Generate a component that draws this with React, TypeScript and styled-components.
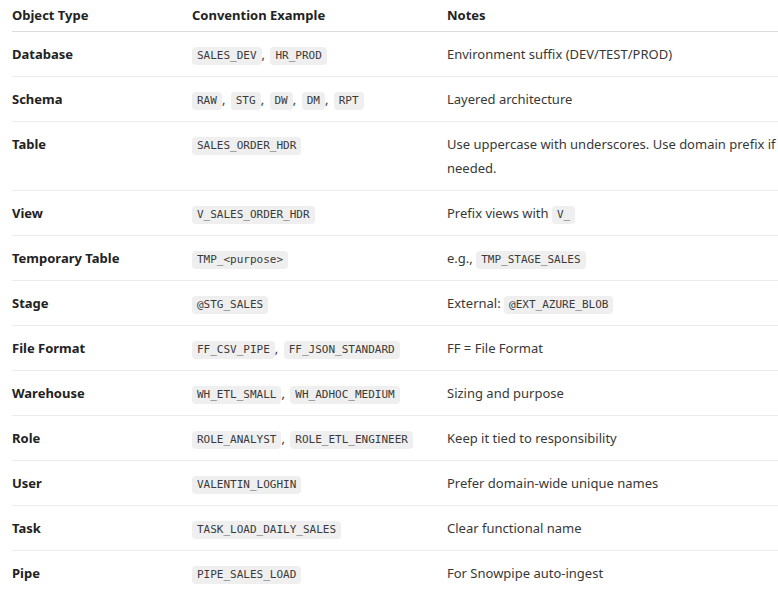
import React from "react";
import styled, { createGlobalStyle } from "styled-components";

const GlobalStyle = createGlobalStyle`
  html, body {
    margin: 0;
    padding: 0;
    background: #ffffff;
    overflow: hidden;
  }
  body {
    font-family: "Noto Sans", "Open Sans", sans-serif;
    color: #333333;
  }
`;

const Page = styled.div`
  padding: 0 0 0 12px;
  width: 790px;
`;

const Table = styled.table`
  width: 780px;
  border-collapse: collapse;
  table-layout: fixed;
  font-size: 13px;
  line-height: 24px;
`;

const HeadCell = styled.th<{ $width?: string }>`
  width: ${(p) => p.$width || "auto"};
  text-align: left;
  font-weight: 700;
  color: #222222;
  padding: 3px 0 4px;
  border-bottom: 1px solid #dcdcdc;
`;

const Row = styled.tr`
  border-bottom: 1px solid #ececec;
`;

const Cell = styled.td<{ $bold?: boolean }>`
  padding: 10px 0;
  vertical-align: top;
  font-weight: ${(p) => (p.$bold ? 700 : 400)};
  color: ${(p) => (p.$bold ? "#222222" : "#383838")};
`;

const Code = styled.code`
  font-family: "DejaVu Sans Mono", "Liberation Mono", monospace;
  font-size: 11px;
  line-height: 15px;
  color: #3a3a3a;
  background: #efefef;
  border-radius: 4px;
  padding: 2px 5px 3px;
`;

const Sep = styled.span`
  margin-right: 2px;
`;

type Part = string | { code: string };

const c = (code: string): Part => ({ code });

const rows: { type: string; example: string[]; notes: Part[] }[] = [
  { type: "Database", example: ["SALES_DEV", "HR_PROD"], notes: ["Environment suffix (DEV/TEST/PROD)"] },
  { type: "Schema", example: ["RAW", "STG", "DW", "DM", "RPT"], notes: ["Layered architecture"] },
  {
    type: "Table",
    example: ["SALES_ORDER_HDR"],
    notes: ["Use uppercase with underscores. Use domain prefix if needed."],
  },
  { type: "View", example: ["V_SALES_ORDER_HDR"], notes: ["Prefix views with ", c("V_")] },
  { type: "Temporary Table", example: ["TMP_<purpose>"], notes: ["e.g., ", c("TMP_STAGE_SALES")] },
  { type: "Stage", example: ["@STG_SALES"], notes: ["External: ", c("@EXT_AZURE_BLOB")] },
  { type: "File Format", example: ["FF_CSV_PIPE", "FF_JSON_STANDARD"], notes: ["FF = File Format"] },
  { type: "Warehouse", example: ["WH_ETL_SMALL", "WH_ADHOC_MEDIUM"], notes: ["Sizing and purpose"] },
  { type: "Role", example: ["ROLE_ANALYST", "ROLE_ETL_ENGINEER"], notes: ["Keep it tied to responsibility"] },
  { type: "User", example: ["VALENTIN_LOGHIN"], notes: ["Prefer domain-wide unique names"] },
  { type: "Task", example: ["TASK_LOAD_DAILY_SALES"], notes: ["Clear functional name"] },
  { type: "Pipe", example: ["PIPE_SALES_LOAD"], notes: ["For Snowpipe auto-ingest"] },
];

export default function App() {
  return (
    <>
      <GlobalStyle />
      <Page>
        <Table>
          <thead>
            <tr>
              <HeadCell $width="180px">Object Type</HeadCell>
              <HeadCell $width="255px">Convention Example</HeadCell>
              <HeadCell>Notes</HeadCell>
            </tr>
          </thead>
          <tbody>
            {rows.map((r) => (
              <Row key={r.type}>
                <Cell $bold>{r.type}</Cell>
                <Cell>
                  {r.example.map((e, i) => (
                    <React.Fragment key={e}>
                      {i > 0 && <Sep>, </Sep>}
                      <Code>{e}</Code>
                    </React.Fragment>
                  ))}
                </Cell>
                <Cell>
                  {r.notes.map((n, i) =>
                    typeof n === "string" ? (
                      <React.Fragment key={i}>{n}</React.Fragment>
                    ) : (
                      <Code key={i}>{n.code}</Code>
                    )
                  )}
                </Cell>
              </Row>
            ))}
          </tbody>
        </Table>
      </Page>
    </>
  );
}
